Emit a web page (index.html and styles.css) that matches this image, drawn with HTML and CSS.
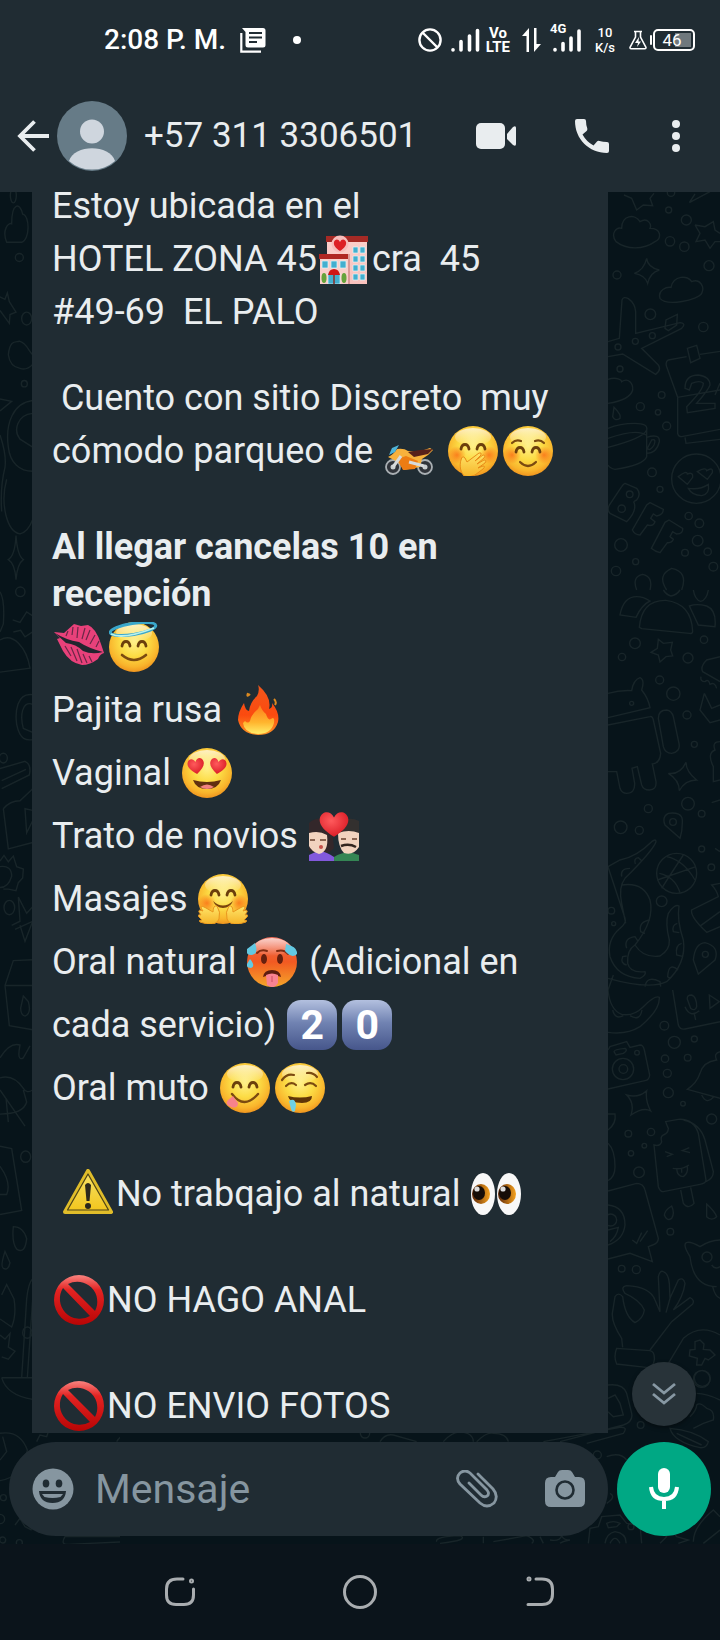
FILE: index.html
```html
<!DOCTYPE html>
<html lang="es">
<head>
<meta charset="utf-8">
<meta name="viewport" content="width=device-width, initial-scale=1">
<title>+57 311 3306501</title>
<link rel="stylesheet" href="styles.css">
</head>
<body>
<svg class="defs" width="0" height="0" aria-hidden="true">
  <defs>
    <radialGradient id="g-face" cx=".5" cy=".4" r=".62"><stop offset="0" stop-color="#fff08a"/><stop offset=".45" stop-color="#fcdc45"/><stop offset=".8" stop-color="#f9b52c"/><stop offset="1" stop-color="#ee8f1c"/></radialGradient>
    <linearGradient id="g-shine" x1="0" y1="0" x2="0" y2="1"><stop offset="0" stop-color="#fff" stop-opacity=".7"/><stop offset="1" stop-color="#fff" stop-opacity="0"/></linearGradient>
    <radialGradient id="g-blush"><stop offset="0" stop-color="#fa5f10" stop-opacity=".7"/><stop offset="1" stop-color="#fa5f10" stop-opacity="0"/></radialGradient>
    <linearGradient id="g-hot" x1="0" y1="0" x2="0" y2="1"><stop offset="0" stop-color="#ee6a55"/><stop offset=".5" stop-color="#f25a22"/><stop offset="1" stop-color="#f5a62a"/></linearGradient>
    <linearGradient id="g-red" x1="0" y1="0" x2="0" y2="1"><stop offset="0" stop-color="#f98480"/><stop offset=".3" stop-color="#e32322"/><stop offset="1" stop-color="#b90505"/></linearGradient>
    <radialGradient id="g-heart" cx=".4" cy=".35" r=".7"><stop offset="0" stop-color="#ff5a5c"/><stop offset="1" stop-color="#d91a24"/></radialGradient>
    <linearGradient id="g-hand" x1="0" y1="0" x2="0" y2="1"><stop offset="0" stop-color="#ffe66a"/><stop offset="1" stop-color="#f6b429"/></linearGradient>
    <linearGradient id="g-flame" x1="0" y1="0" x2="0" y2="1"><stop offset="0" stop-color="#f2571b"/><stop offset=".6" stop-color="#fb4a0f"/><stop offset="1" stop-color="#fd9425"/></linearGradient>
    <linearGradient id="g-flame-in" x1="0" y1="0" x2="0" y2="1"><stop offset="0" stop-color="#fd7c1b"/><stop offset=".6" stop-color="#ffb52e"/><stop offset="1" stop-color="#ffee6a"/></linearGradient>
    <linearGradient id="g-warn" x1="0" y1="0" x2="0" y2="1"><stop offset="0" stop-color="#f7e26a"/><stop offset="1" stop-color="#f2c51a"/></linearGradient>
    <linearGradient id="g-pink" x1="0" y1="0" x2="0" y2="1"><stop offset="0" stop-color="#fbd0cc"/><stop offset="1" stop-color="#f9c2bd"/></linearGradient>
    <linearGradient id="g-iris"><stop offset="0" stop-color="#5d2608"/><stop offset="1" stop-color="#f6a21e"/></linearGradient>
    <path id="heart" d="M0 8C-6 4-9 0-8-4C-7-8-2-9 0-4C2-9 7-8 8-4C9 0 6 4 0 8Z"/>
    <g id="face"><circle cx="25" cy="25" r="25" fill="url(#g-face)"/><ellipse cx="25" cy="11" rx="18" ry="9" fill="url(#g-shine)"/></g>
    <g id="happy-eyes" fill="none" stroke="#6b3f0c" stroke-width="2.8" stroke-linecap="round"><path d="M13 23C14 17 20 17 21 23M29 23C30 17 36 17 37 23"/></g>
    <g id="blush"><circle cx="9" cy="29" r="9" fill="url(#g-blush)"/><circle cx="41" cy="29" r="9" fill="url(#g-blush)"/></g>
    <g id="ban"><path fill="url(#g-red)" fill-rule="evenodd" d="M25 0A25 25 0 1 0 25 50A25 25 0 1 0 25 0ZM14 9A20 20 0 0 1 41 36ZM9 13L36 41A20 20 0 0 1 9 13Z"/></g>
    <g id="eye"><ellipse cx="12" cy="21" rx="12" ry="21" fill="#f8f8f8"/><ellipse cx="10" cy="21" rx="9" ry="10" fill="url(#g-iris)"/><ellipse cx="8" cy="20" rx="6" ry="7" fill="#160d08"/><circle cx="6" cy="16" r="2.6" fill="#ddd"/></g>
  </defs>
</svg>

<div class="top">
  <div class="status">
    <div class="status-left">
      <span class="clock">2:08 P. M.</span>
      <svg width="26" height="26" viewBox="0 0 26 26" fill="none"><path d="M1.3 6V24.7H21" stroke="#fff" stroke-width="2.2"/><path d="M2 1H23Q25.500 1 25.500 3.500V18Q25.500 20.500 23 20.500H8Q5.500 20.500 5.500 18V5Z" fill="#fff"/><path d="M9 6H22M9 10.500H22M9 15H17" stroke="#202c33" stroke-width="2"/></svg>
      <span class="dot"></span>
    </div>
    <div class="status-right">
      <svg width="24" height="24" viewBox="0 0 24 24" fill="none" stroke="#fff" stroke-width="2.4"><circle cx="12" cy="12" r="10.600"/><path d="M4.500 4.500L19.500 19.500"/></svg>
      <svg width="30" height="24" viewBox="0 0 30 24" stroke="#fff" stroke-width="3.600" stroke-linecap="round"><path d="M3 21.800V22M11 13.500V22M19.500 8V22M27.500 2.500V22"/></svg>
      <span class="stack volte"><span>Vo</span><span>LTE</span></span>
      <svg class="updown" width="20" height="26" viewBox="0 0 20 26" fill="#fff"><path d="M7 1V25H4.500V9H0ZM12 1H14.500V17H19L12 25Z"/></svg>
      <span class="cell"><small>4G</small><svg width="30" height="24" viewBox="0 0 30 24" stroke="#fff" stroke-width="3.600" stroke-linecap="round"><path d="M3 21.500V22M11 15.500V22M19 10V22M27 3V22"/></svg></span>
      <span class="stack rate"><span>10</span><span>K/s</span></span>
      <svg class="flask" width="18" height="20" viewBox="0 0 18 20" fill="none" stroke="#fff" stroke-width="1.600"><path d="M5 1.500H13M6.500 2V7L1 17.500Q1 18.800 2 18.800H16Q17 18.800 17 17.500L11.500 7V2"/><path d="M10 7L6 13H9L8 17L12 11.500H9.500Z" fill="#fff" stroke="none"/></svg>
      <span class="battery">46</span>
    </div>
  </div>
  <header class="bar">
    <button class="icon back" aria-label="Atrás"><svg width="32" height="32" viewBox="0 0 32 32" fill="none" stroke="#e9edef" stroke-width="3.800"><path d="M32 16H3M17.500 1.500L3 16L17.500 30.500"/></svg></button>
    <svg class="avatar" width="70" height="70" viewBox="0 0 70 70"><circle cx="35" cy="35" r="35" fill="#667b87"/><circle cx="35" cy="30.500" r="12" fill="#cfd6de"/><path d="M12 60C17 43 53 43 58 60A35 35 0 0 1 12 60Z" fill="#cfd6de"/></svg>
    <h1 class="name">+57 311 3306501</h1>
    <button class="icon video" aria-label="Videollamada"><svg width="40" height="26" viewBox="0 0 40 26" fill="#e9edef"><rect width="29" height="26" rx="5"/><path d="M31 11L37 4Q40 2 40 5V21Q40 24 37 22L31 16Z"/></svg></button>
    <button class="icon call" aria-label="Llamar"><svg width="34" height="34" viewBox="0 0 34 34" fill="#e9edef"><path d="M2 0H9Q11 0 11 2Q11 6 12.300 9.500Q12.600 11 11.600 12L7.500 15.500Q11.500 22.800 18.500 26.500L22 22.500Q23 21.500 24.500 22Q28 23 32 23Q34 23 34 25V32Q34 34 32 34C14 34 0 20 0 2Q0 0 2 0Z"/></svg></button>
    <button class="icon more" aria-label="Más opciones"><svg width="8" height="32" viewBox="0 0 8 32" fill="#e9edef"><circle cx="4" cy="4" r="4"/><circle cx="4" cy="16" r="4"/><circle cx="4" cy="28" r="4"/></svg></button>
  </header>
</div>

<div class="room">
  <svg class="doodle left" width="120" height="1352" viewBox="0 0 120 1352" aria-hidden="true">
    <g transform="translate(0 -2) scale(.33333 .80357)">
      <path d="M20 65C5 50 25 40 35 42C35 15 60 15 68 30C90 32 90 62 65 65ZM0 133L15 136L22 128L28 139L48 152L30 155L28 166L0 150M25 205C30 185 50 190 58 188C80 190 85 200 98 205M25 205Q30 220 60 222Q80 225 98 217M0 260L35 263L0 275M98 262C40 265 15 290 25 320C30 340 60 350 98 350M98 278C50 280 40 300 60 310L98 320M20 360C0 390 20 425 60 428Q85 425 98 410M0 305Q20 330 15 345Q0 370 5 400M0 500Q15 510 10 540L0 550M48 430Q45 455 25 460Q45 465 48 485Q52 465 70 460Q52 455 48 430Z M38 535L60 538L80 525L98 530M40 550L62 548L75 556L98 550"/>
      <path d="M0 560C40 550 80 570 90 595L0 600M98 628C50 625 45 650 50 665C60 685 80 685 98 684M98 640C65 635 60 655 70 670L98 675M0 720L75 711Q95 715 88 728L5 745M5 735L78 721M10 770Q30 760 60 760L98 745M10 770L25 820L98 812M98 772L75 770L80 800L98 785M0 835L12 828L25 836L40 829L50 842L70 845L68 856L55 862L48 872L25 870L10 870M0 842Q35 840 35 854Q25 868 0 868M35 915L60 910L55 880L80 900L98 892M45 920L98 910L75 935L60 915M15 990L40 959L98 958M15 990L28 1040L98 1045M15 990L98 990M62 1018L70 1003L85 1010Q95 1025 75 1028Q62 1027 62 1018Z"/>
      <path d="M0 1080Q30 1060 60 1064Q50 1085 70 1080L90 1065M0 1105Q40 1100 70 1118Q80 1125 98 1120M0 1150Q70 1150 80 1135L70 1120M0 1120L75 1165M18 1130L25 1160M0 1190L35 1193L65 1270L0 1275M0 1215Q35 1235 20 1250L0 1250M40 1290Q70 1290 80 1305Q75 1325 50 1318Q35 1310 40 1290ZM15 1321L30 1335Q25 1345 10 1342Q0 1340 15 1321ZM5 1375L20 1362L42 1380Q50 1400 35 1415L0 1405M0 1425L15 1430L30 1423L25 1440L45 1445L25 1455L5 1452M98 1355Q85 1360 80 1380L65 1478M98 1380L82 1478M5 1478H98M5 1478Q20 1500 98 1505"/>
      <circle cx="40" cy="7" r="9"/><ellipse cx="58" cy="84" rx="12" ry="5"/><ellipse cx="80" cy="160" rx="15" ry="8"/><ellipse cx="73" cy="241" rx="9" ry="4"/><ellipse cx="61" cy="500" rx="14" ry="6"/><ellipse cx="10" cy="707" rx="12" ry="6"/><ellipse cx="28" cy="893" rx="16" ry="9"/><ellipse cx="77" cy="1203" rx="15" ry="7"/><ellipse cx="82" cy="1422" rx="14" ry="7"/>
    </g>
    <g transform="translate(0 1238) scale(.33333)">
      <path d="M0 10Q60 0 82 60Q70 140 0 152M0 90L20 65L8 20M110 35L120 15L140 20L145 5M350 35Q370 0 415 20L400 40"/>
      <path d="M195 320Q180 345 205 343L420 333Q435 325 420 320ZM45 285L60 265L75 290L95 300"/>
      <circle cx="10" cy="203" r="9"/><circle cx="0" cy="267" r="14"/><circle cx="8" cy="330" r="9"/><circle cx="58" cy="338" r="9"/>
    </g>
  </svg>
  <svg class="doodle right" width="540" height="1352" viewBox="0 0 540 1352" aria-hidden="true">
    <g transform="translate(420 -2) scale(.33333)">
      <path d="M72 15L95 25L110 60L130 45L158 47L150 25L162 10M268 38L330 5M268 38L285 12M48 155C30 130 50 110 65 115C65 75 105 70 120 95C145 80 155 105 150 115C185 115 185 145 165 155C130 180 80 180 48 155ZM285 105L315 110L340 95L345 120L360 130M285 105L300 130L288 155L315 150L330 175L345 155L360 155M140 205Q143 232 178 240Q150 248 143 280Q135 255 103 250Q132 240 140 205ZM180 325C172 300 200 290 213 292C220 255 265 255 275 275C300 265 315 290 305 310C295 330 200 350 180 325Z"/>
      <path d="M24 455L58 445L66 330Q70 318 85 326Q105 340 107 365L107 430L240 398Q260 400 245 415L125 475L175 525Q185 540 167 553L68 492L24 500M195 415L198 390L232 373L230 405L205 422ZM260 500L205 510Q195 515 200 530L233 622L360 600M233 622V730Q235 740 245 740L360 718M255 742L258 760L360 748M300 493L360 484M262 475L290 466L300 505L272 518ZM255 595Q255 555 295 555Q330 560 330 585Q325 600 290 640L345 640L345 655L262 668L260 650Q310 600 310 580Q300 570 275 580L268 600ZM345 615L360 580"/>
      <path d="M24 568C50 560 65 570 65 575C85 562 100 580 98 600Q90 630 24 640M42 652Q65 675 60 685Q45 695 38 680ZM24 715Q60 700 105 700Q145 700 140 720Q130 745 24 772M24 745Q110 715 138 735M140 720V800Q130 825 45 838Q30 835 24 825M140 742Q180 730 178 755Q170 790 140 790M155 750Q170 745 162 765Q150 785 142 775ZM235 860Q260 840 262 852Q280 845 278 862L262 883ZM292 845Q318 830 320 842Q340 830 337 848L322 868ZM265 895Q300 900 325 883Q330 912 305 917Q275 915 265 895Z"/>
      <path d="M75 880L110 895Q125 912 110 930Q98 935 103 940Q110 965 80 995L30 970Q20 960 28 945L65 890Q70 882 75 880ZM150 938L190 958Q190 975 170 978L160 972L152 985L165 995Q160 1010 142 1005L120 1035Q105 1035 97 1020L140 945ZM207 990L248 1015Q250 1032 230 1032L218 1025L210 1040L220 1048Q215 1060 202 1058L180 1088Q165 1085 154 1075L195 997ZM110 1200Q95 1160 128 1153Q160 1160 150 1200M200 1200Q170 1155 215 1135Q265 1145 245 1200"/>
      <g><circle cx="213" cy="8" r="11"/><circle cx="206" cy="60" r="9"/><circle cx="259" cy="90" r="15"/><circle cx="210" cy="154" r="14"/><circle cx="253" cy="170" r="14"/><circle cx="327" cy="227" r="15"/><circle cx="51" cy="255" r="12"/><circle cx="151" cy="373" r="16"/><circle cx="310" cy="411" r="14"/><circle cx="157" cy="437" r="9"/><circle cx="106" cy="454" r="9"/><circle cx="54" cy="471" r="9"/><circle cx="60" cy="537" r="9"/><circle cx="185" cy="615" r="10"/><circle cx="121" cy="650" r="12"/><circle cx="174" cy="667" r="8"/><circle cx="200" cy="708" r="12"/><circle cx="289" cy="866" r="74"/><circle cx="156" cy="847" r="13"/><circle cx="180" cy="898" r="9"/><circle cx="89" cy="913" r="10"/><circle cx="65" cy="956" r="11"/><circle cx="266" cy="978" r="11"/><circle cx="298" cy="1000" r="13"/><circle cx="293" cy="1052" r="16"/><circle cx="63" cy="1065" r="19"/><circle cx="255" cy="1088" r="10"/><circle cx="323" cy="1085" r="11"/><circle cx="107" cy="1115" r="9"/><circle cx="48" cy="1143" r="14"/><circle cx="340" cy="1130" r="13"/></g>
    </g>
    <g transform="translate(420 398) scale(.33333)">
      <path d="M60 75Q70 20 110 20Q130 20 150 33Q125 45 108 82ZM118 112Q125 30 197 31Q275 40 278 125Q277 132 268 130L125 116ZM268 48Q290 40 320 48Q350 60 345 110L295 105ZM280 0Q285 30 302 34Q320 30 325 0M190 0Q200 15 213 18Q230 15 240 0M175 148L190 160L217 157L212 180L218 198L198 200L180 216L175 195L153 187L172 175ZM24 310Q60 300 95 302Q100 270 120 263Q135 270 125 300Q145 325 150 353L24 383M24 405L150 380Q158 378 160 390L182 490Q180 520 157 522L168 575Q170 600 148 600Q130 600 125 585L112 530L96 535L104 580Q105 610 80 610Q65 610 60 595L50 545L24 545M175 385Q175 360 200 360Q215 362 220 380L237 460Q242 485 215 490Q195 490 190 470Z"/>
      <path d="M258 517Q258 545 290 570Q255 570 238 602Q238 570 205 550Q240 555 258 517ZM360 200L320 210Q300 230 308 245L360 275M303 260Q300 275 315 275Q325 265 330 283Q345 275 350 295M313 310L300 360L330 398L360 390M313 310L335 355L360 345M240 745L195 705Q185 680 205 670Q245 665 247 690Q248 720 240 745ZM360 455Q335 455 345 480Q320 490 340 530V575L360 570M335 638L360 630M345 775L360 785M360 880L335 885Q350 900 355 920L275 960Q270 980 320 1027L360 1010M302 1007L360 965"/>
      <path d="M24 830L60 810Q110 800 155 755Q168 745 168 755Q160 780 75 865Q55 890 65 940L77 1000M24 830L75 985Q80 1000 60 1015Q20 1050 30 1100Q50 1160 120 1165Q140 1155 135 1145Q90 1150 83 1120Q80 1080 105 1065M65 885Q130 875 150 930Q165 990 105 1065Q130 1105 180 1098Q210 1080 208 1050Q195 1000 205 970Q225 940 237 948Q230 990 250 1050Q260 1120 200 1175Q150 1200 24 1165M24 1200L40 1155M106 822Q100 805 115 803L125 812M65 860Q60 835 90 835M150 990Q115 995 122 1025L135 1030M80 1075Q70 1045 105 1040L115 1055M80 1125Q60 1120 68 1100L80 1098M232 1000Q215 1005 220 1025L238 1028M245 1060Q225 1065 230 1095L250 1100M235 1140Q205 1115 203 1160L210 1165M135 1190Q140 1155 180 1175L182 1190M172 870Q230 850 288 830M185 895Q220 840 250 795M178 850Q225 860 240 908M200 800Q250 810 285 870M295 1152L280 1110Q285 1060 315 1058Q360 1070 345 1110Z"/>
      <g><circle cx="105" cy="160" r="16"/><circle cx="66" cy="201" r="11"/><circle cx="264" cy="204" r="15"/><circle cx="312" cy="149" r="11"/><circle cx="179" cy="270" r="12"/><circle cx="220" cy="311" r="20"/><circle cx="261" cy="375" r="12"/><circle cx="95" cy="340" r="6"/><circle cx="283" cy="463" r="9"/><circle cx="264" cy="641" r="19"/><circle cx="145" cy="656" r="12"/><circle cx="305" cy="671" r="10"/><circle cx="62" cy="712" r="19"/><circle cx="118" cy="721" r="12"/><circle cx="219" cy="696" r="10"/><circle cx="305" cy="777" r="9"/><circle cx="334" cy="832" r="10"/><circle cx="230" cy="850" r="60"/><circle cx="185" cy="934" r="16"/><circle cx="316" cy="1093" r="9"/><circle cx="34" cy="962" r="10"/><circle cx="41" cy="1001" r="6"/></g>
    </g>
    <g transform="translate(420 798) scale(.33333)">
      <path d="M24 0Q30 60 65 73Q100 80 130 50Q165 15 178 22Q180 60 120 110Q80 135 24 127M38 60Q45 90 70 77M90 77Q120 95 126 60M218 0L235 105Q240 120 255 117L360 95M262 28Q260 15 275 15Q290 20 290 50Q285 65 272 55ZM255 50Q270 85 298 62M283 72L287 90M328 15L330 55L358 35ZM24 180L30 170L80 155L90 172L120 165Q130 165 133 180L149 255Q148 270 135 272L24 297M42 185Q42 178 75 175Q85 180 70 190L48 195ZM140 302Q135 330 152 363Q130 350 93 375Q105 340 80 315Q115 325 140 302ZM360 185Q340 190 350 210Q310 215 300 250Q290 280 262 298L360 325M305 315Q320 345 340 322"/>
      <path d="M197 395L235 388Q280 385 295 430L318 570Q318 580 300 583L190 605Q180 605 175 590L162 465Q180 470 185 455Q180 440 190 435Q205 430 205 415Q200 405 197 395ZM250 390Q300 400 315 450L340 545Q340 565 318 575M242 600L250 640Q265 660 282 640L272 592M195 485L217 493L200 500M268 473L247 482L270 488M218 535Q245 540 267 525M230 537Q232 560 250 560Q265 550 262 530M245 535V548M215 648Q225 670 215 685Q200 695 193 675Q195 660 215 648ZM320 642Q345 665 350 680Q335 695 320 680ZM24 372H45Q50 400 24 420M24 460Q45 480 45 530Q45 560 24 572M24 603L110 580Q130 580 135 600L175 745Q175 760 158 765L145 770L157 815L90 790L24 807M24 645Q75 650 75 705Q70 750 24 765M24 720L55 712Q50 740 30 755M97 750L110 760L125 728M120 755L143 722"/>
      <path d="M68 1072L65 1045Q35 1000 37 970L45 920Q55 905 68 920Q75 980 105 998Q130 985 133 960Q120 930 75 910Q60 890 80 887Q150 890 165 930L180 965L175 860Q180 840 190 845Q205 850 208 880L210 925L198 968M210 925L235 870Q250 860 255 880Q250 920 220 960L270 923Q285 930 278 942L215 995L150 1080M50 1075L150 1082Q165 1085 163 1110Q160 1130 145 1133L50 1122Q40 1100 50 1075ZM205 1120L250 1045Q300 1000 360 1035M285 1055L300 1050L312 1062L310 1078L330 1080L345 1095L325 1110L315 1105L305 1125L290 1125L292 1105L268 1098L270 1080L285 1078ZM270 800Q245 760 262 757Q275 755 300 770Q330 750 360 750M270 800Q280 890 350 890M338 890Q345 920 360 925M335 825Q345 840 360 830"/>
      <g><circle cx="193" cy="107" r="13"/><circle cx="223" cy="157" r="18"/><circle cx="283" cy="147" r="9"/><circle cx="195" cy="206" r="11"/><circle cx="263" cy="203" r="10"/><circle cx="202" cy="250" r="12"/><circle cx="205" cy="308" r="15"/><circle cx="249" cy="341" r="7"/><circle cx="69" cy="237" r="32"/><circle cx="70" cy="237" r="13"/><circle cx="111" cy="188" r="7"/><circle cx="85" cy="431" r="10"/><circle cx="153" cy="426" r="11"/><circle cx="133" cy="467" r="7"/><circle cx="93" cy="490" r="8"/><circle cx="335" cy="387" r="15"/><circle cx="117" cy="547" r="16"/><circle cx="32" cy="690" r="18"/><circle cx="211" cy="725" r="10"/><circle cx="321" cy="801" r="15"/><circle cx="65" cy="836" r="10"/><circle cx="109" cy="839" r="12"/><circle cx="307" cy="1165" r="24"/></g>
    </g>
    <g transform="translate(180 1158) scale(.33333)">
      <path d="M744 105Q790 100 800 130L815 190Q820 215 790 225L600 275M744 145L765 135L780 160L790 195L760 200L744 185M550 275L780 232Q805 230 790 250L680 280M990 200Q1010 180 1010 165Q1020 155 1040 175Q1065 180 1060 210L1030 220L1000 235M930 235Q1000 240 1045 275Q1040 295 1020 293Q940 275 930 235ZM950 250L1025 285M1010 130Q1040 130 1080 150M740 320Q780 305 800 330M740 460Q770 440 750 430M685 580L690 535L715 530L725 500L780 495L800 520L840 525L845 580M740 520Q760 510 780 520L770 530L745 533ZM735 580Q740 550 765 545Q800 550 798 580M750 580Q765 550 780 580M900 580L920 560L900 540L930 535L950 560L985 570L955 580M1000 575Q1000 530 1060 480L1080 500M1080 540L1030 580M230 575Q225 560 300 557Q330 570 240 580M370 560V580M400 575L500 557Q530 570 515 580M540 560L550 580M570 570Q600 575 605 557Q610 570 630 570Q605 575 600 580M60 275Q75 250 100 255L170 275M250 275Q270 250 300 245Q340 250 340 275M350 275Q380 245 400 250Q440 250 445 275"/>
      <circle cx="1025" cy="87" r="25"/><circle cx="842" cy="225" r="10"/><circle cx="712" cy="315" r="12"/><circle cx="813" cy="530" r="9"/><circle cx="15" cy="250" r="14"/>
    </g>
  </svg>

  <main class="chat">
    <article class="bubble">
      <p class="para intro">Estoy ubicada en el
HOTEL ZONA 45<svg class="emoji" viewBox="0 0 50 50" role="img" aria-label="hotel del amor"><rect x="8" y="3" width="40" height="47" fill="url(#g-pink)"/><rect x="7" y="2" width="42" height="6" fill="#a52a25"/><path d="M30 20V50" stroke="#dc9a98" stroke-width="2"/><rect x="1" y="23" width="28" height="27" fill="#f9cfca"/><rect y="20" width="29" height="5" fill="#b02722"/><circle cx="21" cy="10" r="8.500" fill="#f7bdbb"/><use href="#heart" transform="translate(21 11) scale(.75)" fill="#dd2025"/><g fill="#43afcf" stroke="#dff6fb" stroke-width=".7"><path d="M3 27h6v7H3ZM12 27h6v7h-6ZM21 27h6v7h-6ZM34 13h5v6h-5ZM41 13h5v6h-5ZM34 22h5v6h-5ZM41 22h5v6h-5ZM34 31h5v6h-5ZM41 31h5v6h-5ZM34 40h5v6h-5ZM41 40h5v6h-5Z"/><path d="M9 39H21V50H9Z"/></g><path d="M15 40V50" stroke="#8c2d26" stroke-width="1.500"/><path d="M9 41Q10 35 15 35Q20 35 21 41Z" fill="#cf1716"/><g fill="#66a33b"><ellipse cx="5" cy="44" rx="2.500" ry="5"/><ellipse cx="25" cy="44" rx="2.500" ry="5"/></g></svg>cra  45
#49-69  EL PALO</p>
      <p class="para"> Cuento con sitio Discreto  muy
cómodo parqueo de <svg class="emoji" viewBox="0 0 50 50" role="img" aria-label="motocicleta"><g fill="#30343a" stroke="#a9afb3" stroke-width="1.800"><circle cx="9" cy="41" r="7"/><circle cx="41" cy="41" r="7"/></g><g fill="#c9ced0"><circle cx="9" cy="41" r="2.500"/><circle cx="41" cy="41" r="2.500"/></g><path d="M4 31Q10 28 13 23Q20 22 24 25L34 26L46 22L49 24L44 29L38 33L36 41L20 44L14 36Z" fill="#f8b13c"/><path d="M24 26L30 31L44 28L49 23L36 24Z" fill="#58201a"/><path d="M5 29L8 22L15 19L11 26Z" fill="#4fb4d8"/><path d="M13 33L19 44L31 43L34 35L22 30Z" fill="#ed7c13"/><path d="M25 36L40 40M9 41L17 30" stroke="#d7dadb" stroke-width="3"/></svg> <svg class="emoji" viewBox="0 0 50 50" role="img" aria-label="cara con mano en la boca"><use href="#face"/><use href="#blush"/><use href="#happy-eyes"/><path d="M16 50C11 44 12 37 13 34Q14 29 17 32L19 36L31 27Q34 26 33 29L27 35L35 29Q38 29 36 32L29 38L36 34Q39 34 37 37L30 42L35 40Q38 40 35 43L27 49Q21 52 16 50Z" fill="url(#g-hand)" stroke="#e88c18"/></svg><svg class="emoji" viewBox="0 0 50 50" role="img" aria-label="cara sonrojada"><use href="#face"/><use href="#blush"/><g transform="translate(0 3)"><use href="#happy-eyes"/></g><path d="M9 17Q13 13 18 15M32 15Q37 13 41 17M17 36Q25 44 33 36" fill="none" stroke="#7b4a10" stroke-width="2.200" stroke-linecap="round"/></svg></p>
      <p class="para strong">Al llegar cancelas 10 en
recepción</p>
      <p class="para list"><svg class="emoji" viewBox="0 0 50 50" role="img" aria-label="beso"><path d="M0 10L10 11L20 2L27 4L34 3Q42 6 47 22L50 31Q46 32 44 37Q36 43 28 43Q16 41 9 29L3 17L6 16Z" fill="#e8417a"/><path d="M1 11Q12 18 25 20Q34 26 49 30Q38 33 29 29Q22 22 12 21Z" fill="#22262f"/><path d="M14 9L12 14M19 5L18 13M24 5L23 16M31 6L28 17M36 8L32 18M41 13L36 22M45 19L42 25M11 24L17 34M17 25L23 39M23 27L28 41M29 32L33 41M35 34L38 40" stroke="#6b2747" stroke-width="1.200"/></svg><svg class="emoji" viewBox="0 0 50 50" role="img" aria-label="cara con aureola"><use href="#face"/><g transform="translate(0 1)"><use href="#happy-eyes"/></g><path d="M13 33Q25 43 37 33" fill="none" stroke="#7b4a10" stroke-width="2.600" stroke-linecap="round"/><ellipse cx="24" cy="7" rx="23" ry="5.500" transform="rotate(-9 24 7)" fill="none" stroke="#3aa7cb" stroke-width="3"/><path d="M2 12Q14 18 45 6" fill="none" stroke="#b8f2ed" stroke-width="1.800"/></svg>
Pajita rusa <svg class="emoji" viewBox="0 0 50 50" role="img" aria-label="fuego"><path d="M25 0Q39 12 36 24Q40 23 39 18Q47 28 45 37Q41 50 25 50Q8 49 5 35Q5 27 11 18Q12 25 16 26Q17 17 24 11Q27 5 25 0Z" fill="url(#g-flame)"/><path d="M12 36Q15 39 17 36Q18 30 25 24L27 20Q29 26 33 29Q35 36 38 34Q42 31 41 38Q38 49 25 49Q11 48 10 38Z" fill="url(#g-flame-in)"/><path d="M15 8Q13 13 17 9M41 14Q44 17 42 20" stroke="#dc8a20" stroke-width="2" fill="none"/></svg>
Vaginal <svg class="emoji" viewBox="0 0 50 50" role="img" aria-label="cara enamorada"><use href="#face"/><use href="#heart" transform="translate(14 18) rotate(-8)" fill="url(#g-heart)"/><use href="#heart" transform="translate(36 18) rotate(8)" fill="url(#g-heart)"/><path d="M11 32Q25 36 39 32Q36 41 25 41Q14 41 11 32Z" fill="#603010"/><path d="M18 39Q25 34 32 39Q25 43 18 39Z" fill="#f08280"/></svg>
Trato de novios <svg class="emoji" viewBox="0 0 50 50" role="img" aria-label="pareja con corazón"><path d="M0 12Q8 4 22 10L25 37Q20 43 15 42L0 40Z" fill="#33272a"/><path d="M28 14Q38 4 50 10V24H29Z" fill="#33302f"/><path d="M0 50V44Q12 36 25 46V50Z" fill="#8259dc"/><path d="M25 50V46Q37 38 50 44V50Z" fill="#348554"/><path d="M0 22Q10 19 18 24Q20 41 10 43Q2 40 0 35ZM29 22Q40 18 50 22V36Q44 45 35 42Q29 36 29 22Z" fill="#f2d3bf"/><path d="M1 29H6M11 29H17M32 28H37M43 28H48" stroke="#68412f" stroke-width="1.300"/><path d="M32 35Q40 32 47 36" stroke="#33251f" stroke-width="2.500" fill="none"/><circle cx="12" cy="36" r="2" fill="#c6504a"/><use href="#heart" transform="translate(25 13) scale(1.750 1.600)" fill="url(#g-heart)"/></svg>
Masajes <svg class="emoji" viewBox="0 0 50 50" role="img" aria-label="cara con abrazo"><use href="#face"/><use href="#blush"/><g transform="translate(0 -2)"><use href="#happy-eyes"/></g><path d="M15 27Q25 36 35 27Q32 34 25 34Q18 34 15 27Z" fill="#7a430d"/><path id="hug" d="M21 45Q19 51 9 50L2 48Q0 46 4 46L1 43Q-1 40 3 41L1 38Q0 35 5 37L3 34Q3 31 8 34L15 38Q15 31 19 32Q23 38 21 45Z" fill="url(#g-hand)" stroke="#e9951d"/><use href="#hug" transform="matrix(-1 0 0 1 50 0)"/></svg>
Oral natural <svg class="emoji" viewBox="0 0 50 50" role="img" aria-label="cara con calor"><circle cx="25" cy="25" r="25" fill="url(#g-hot)"/><ellipse cx="25" cy="10" rx="18" ry="9" fill="url(#g-shine)"/><g fill="#66200e"><ellipse cx="17" cy="22" rx="3" ry="5"/><ellipse cx="33" cy="22" rx="3" ry="5"/></g><path d="M10 16Q14 12 20 14M30 14Q37 12 41 17" fill="none" stroke="#812c12" stroke-width="2" stroke-linecap="round"/><path d="M16 40Q17 33 25 33Q33 33 34 40Q25 36 16 40Z" fill="#5e1c10"/><path d="M19 38Q25 35 31 38V46Q27 53 20 48Z" fill="#f98292"/><path d="M25 39V45" stroke="#cd4e63"/><path d="M8 6Q12 17 5 18Q-2 18 0 12ZM39 7Q51 10 50 17Q45 22 38 14ZM3 22Q9 29 4 31Q-1 31 0 27Z" fill="#63c9e2"/></svg> (Adicional en
cada servicio) <span class="keycap">2</span><span class="keycap">0</span>
Oral muto <svg class="emoji" viewBox="0 0 50 50" role="img" aria-label="cara saboreando"><use href="#face"/><g transform="translate(0 1)"><use href="#happy-eyes"/></g><path d="M12 31Q24 47 38 31" fill="none" stroke="#7b4a10" stroke-width="2.400" stroke-linecap="round"/><path d="M13 33L18 40Q18 46 11 44Q4 41 8 37Z" fill="#f8828b"/></svg><svg class="emoji" viewBox="0 0 50 50" role="img" aria-label="cara babeando"><use href="#face"/><path d="M11 23Q16 18 21 22M30 22Q36 18 41 23M7 17Q12 10 19 12M32 10Q38 9 42 14" fill="none" stroke="#7b4a10" stroke-width="2.200" stroke-linecap="round"/><path d="M13 33Q25 36 37 33Q37 40 27 40Q14 40 13 33Z" fill="#603407"/><path d="M14 38Q20 34 21 42L20 48Q17 50 16 46Z" fill="#6ed0e5"/></svg></p>
      <p class="para"> <svg class="emoji" viewBox="0 0 50 50" role="img" aria-label="advertencia"><path d="M25 2L48 43H2Z" fill="url(#g-warn)" stroke="#e0bd2a" stroke-width="4" stroke-linejoin="round"/><path d="M25 5L45.500 41H4.500Z" fill="none" stroke="#4e4418" stroke-width="1.200" stroke-linejoin="round"/><path d="M22 16Q25 12 28 16L26.500 32H23.500Z" fill="#2c281c"/><circle cx="25" cy="37" r="3" fill="#2c281c"/></svg>No trabqajo al natural <svg class="emoji" viewBox="0 0 50 50" role="img" aria-label="ojos"><g transform="translate(0 4)"><use href="#eye"/><use href="#eye" x="26"/></g></svg></p>
      <p class="para"><svg class="emoji" viewBox="0 0 50 50" role="img" aria-label="prohibido"><use href="#ban"/></svg>NO HAGO ANAL</p>
      <p class="para"><svg class="emoji" viewBox="0 0 50 50" role="img" aria-label="prohibido"><use href="#ban"/></svg>NO ENVIO FOTOS</p>
    </article>
  </main>

  <button class="jump" aria-label="Ir al final"><svg width="24" height="24" viewBox="0 0 24 24" fill="none" stroke="#8798a3" stroke-width="2.800"><path d="M1 2L12 11L23 2M1 12L12 21L23 12"/></svg></button>

  <form class="composer">
    <div class="field">
      <button type="button" class="icon" aria-label="Emojis"><svg width="42" height="42" viewBox="0 0 42 42"><circle cx="21" cy="21" r="20.500" fill="#8696a0"/><g fill="#202c33"><ellipse cx="14" cy="15.500" rx="3.300" ry="4"/><ellipse cx="27" cy="15.500" rx="3.300" ry="4"/><path d="M7 23H34Q33 35 20.500 35Q8 35 7 23Z"/></g><path d="M10 26H31L28.500 29Q20.500 31 12.500 29Z" fill="#8696a0"/></svg></button>
      <input type="text" placeholder="Mensaje" aria-label="Mensaje">
      <button type="button" class="icon clip" aria-label="Adjuntar"><svg width="42" height="38" viewBox="0 0 42 38" fill="none" stroke="#8696a0" stroke-width="2.800" stroke-linecap="round"><path d="M22 4L37 19Q43 26 38 33Q31 39 24 33L4 14Q-1 8 4 3Q9-1 14 3L31 20Q34 24 31 26Q28 28 25 25L13 13"/></svg></button>
      <button type="button" class="icon" aria-label="Cámara"><svg width="40" height="38" viewBox="0 0 40 38"><path d="M6 7H10L13 2Q14 0 17 0H23Q26 0 27 2L30 7H34Q40 7 40 13V31Q40 37 34 37H6Q0 37 0 31V13Q0 7 6 7Z" fill="#8696a0"/><circle cx="20" cy="20" r="8.500" fill="none" stroke="#202c33" stroke-width="2.600"/></svg></button>
    </div>
    <button type="button" class="mic" aria-label="Grabar audio"><svg width="30" height="42" viewBox="0 0 30 42"><rect x="9" width="12" height="25" rx="6" fill="#fff"/><path d="M2 19Q3 31 15 31Q27 31 28 19M15 31V41" fill="none" stroke="#fff" stroke-width="4"/></svg></button>
  </form>
</div>

<nav class="nav">
  <button class="icon" aria-label="Recientes"><svg width="32" height="32" viewBox="0 0 32 32" fill="none" stroke="#a9adb0" stroke-width="3" stroke-linecap="round"><path d="M19 3H13Q2.500 3 2.500 13V19Q2.500 28.500 12 28.500H20Q29.500 28.500 29.500 19V13"/><circle cx="27.500" cy="5" r="1"/></svg></button>
  <button class="icon" aria-label="Inicio"><svg width="34" height="34" viewBox="0 0 34 34" fill="none" stroke="#a9adb0" stroke-width="3"><circle cx="17" cy="17" r="15.500"/></svg></button>
  <button class="icon" aria-label="Volver"><svg width="30" height="32" viewBox="0 0 30 32" fill="none" stroke="#a9adb0" stroke-width="3" stroke-linecap="round"><path d="M11 3H17Q27.500 3 27.500 13V18Q27.500 28.500 17 28.500H3"/><circle cx="4" cy="3" r="1"/></svg></button>
</nav>
</body>
</html>
```
FILE: styles.css
```css
* { box-sizing: border-box; }

body {
  margin: 0;
  min-height: 100vh;
  display: flex;
  flex-direction: column;
  background: #07141a;
  color: #e9edef;
  font-family: Roboto, "Noto Sans", sans-serif;
}

h1, p { margin: 0; }
svg { flex: none; }
button { font: inherit; color: inherit; cursor: pointer; }

.defs { position: absolute; }

.icon {
  display: flex;
  align-items: center;
  justify-content: center;
  padding: 0;
  border: 0;
  background: none;
}

/* Status bar and header */
.top {
  position: relative;
  z-index: 2;
  background: #202c33;
}

.status {
  display: flex;
  align-items: center;
  justify-content: space-between;
  height: 80px;
  padding: 0 25px 0 104px;
  color: #fff;
}

.status-left { display: flex; align-items: center; }

.clock {
  margin-right: 14px;
  font-size: 28px;
  line-height: 32px;
  font-weight: 500;
}

.dot {
  width: 8px;
  height: 8px;
  margin-left: 27px;
  border-radius: 50%;
  background: #fff;
}

.status-right { display: flex; align-items: center; }
.status-right > svg:nth-child(2) { margin-left: 8px; }

.stack {
  display: flex;
  flex-direction: column;
  align-items: center;
}

.volte {
  margin-left: 6px;
  font-size: 15px;
  line-height: 14px;
  font-weight: 700;
}

.updown { margin-left: 12px; }

.cell { position: relative; display: flex; margin-left: 10px; }

.cell small {
  position: absolute;
  top: -6px;
  left: -2px;
  font-size: 13px;
  line-height: 14px;
  font-weight: 700;
}

.rate {
  margin-left: 13px;
  font-size: 13px;
  line-height: 15px;
  font-weight: 500;
}

.flask { margin-left: 14px; }

.battery {
  position: relative;
  width: 42px;
  height: 22px;
  margin-left: 6px;
  padding-right: 4px;
  border: 2px solid #fff;
  border-radius: 5px;
  background: linear-gradient(#6f787d, #6f787d) 20px 2px / 16px 14px no-repeat;
  font-size: 17px;
  line-height: 18px;
  text-align: center;
}

.battery::before {
  content: "";
  position: absolute;
  left: -5px;
  top: 4px;
  width: 2px;
  height: 10px;
  border-radius: 1px;
  background: #fff;
}

.bar {
  display: flex;
  align-items: center;
  height: 112px;
  padding: 0 40px 0 17px;
}

.avatar { margin-left: 8px; }

.name {
  flex: 1;
  margin-left: 17px;
  font-size: 35px;
  line-height: 44px;
  font-weight: 400;
  white-space: nowrap;
}

.call { margin-left: 59px; }
.more { margin-left: 63px; }

/* Conversation */
.room {
  position: relative;
  flex: 1;
  display: flex;
  flex-direction: column;
  overflow: hidden;
}

.doodle {
  position: absolute;
  top: 0;
  fill: none;
  stroke: #182529;
}

.doodle.left { left: 0; }
.doodle.right { right: 0; }
.doodle path, .doodle circle, .doodle ellipse { vector-effect: non-scaling-stroke; stroke-width: 1.4px; }

.chat {
  position: relative;
  flex: 1;
  padding: 0 112px 0 32px;
  overflow: hidden;
}

.bubble {
  min-height: 100%;
  padding: 0 20px;
  background: #202c33;
}

.para {
  margin-bottom: 53px;
  font-size: 36px;
  line-height: 53px;
  white-space: pre-wrap;
}

.para.intro { margin-top: -12px; margin-bottom: 33px; }
.para:nth-child(2) { margin-bottom: 46px; }
.para.strong { margin-bottom: -2px; line-height: 47px; font-weight: 700; }
.para.list { margin-bottom: 48px; line-height: 63px; }
.para:last-child { margin-bottom: 0; }

.emoji {
  width: 50px;
  height: 50px;
  margin: 0 3px 0 2px;
  vertical-align: -13px;
}

.keycap {
  display: inline-block;
  width: 50px;
  height: 50px;
  margin: 0 3px 0 2px;
  border-radius: 14px;
  background: linear-gradient(#b3c0df, #7183b2 45%, #46568b);
  color: #fff;
  font-size: 41px;
  line-height: 50px;
  font-weight: 700;
  text-align: center;
  vertical-align: -2px;
}

.jump {
  position: absolute;
  right: 24px;
  bottom: 118px;
  display: flex;
  align-items: center;
  justify-content: center;
  width: 64px;
  height: 64px;
  padding: 0;
  border: 0;
  border-radius: 50%;
  background: #283339;
  box-shadow: 0 2px 4px #0006;
}

/* Message box */
.composer {
  position: relative;
  display: flex;
  gap: 9px;
  padding: 8px 9px;
}

.field {
  flex: 1;
  display: flex;
  align-items: center;
  min-width: 0;
  height: 94px;
  padding: 0 23px;
  border-radius: 47px;
  background: #202c33;
}

.field input {
  flex: 1;
  min-width: 0;
  margin: 0 23px 0 21px;
  padding: 0;
  border: 0;
  outline: 0;
  background: none;
  color: #e9edef;
  font: 400 41px/50px Roboto, "Noto Sans", sans-serif;
}

.field input::placeholder { color: #8696a0; opacity: 1; }

.clip { margin-right: 47px; }

.mic {
  display: flex;
  align-items: center;
  justify-content: center;
  width: 94px;
  height: 94px;
  padding: 0;
  border: 0;
  border-radius: 50%;
  background: #00a884;
}

/* System navigation */
.nav {
  display: grid;
  grid-template-columns: repeat(3, 1fr);
  height: 96px;
  padding: 0 12.5%;
  background: #0b141b;
}
```
